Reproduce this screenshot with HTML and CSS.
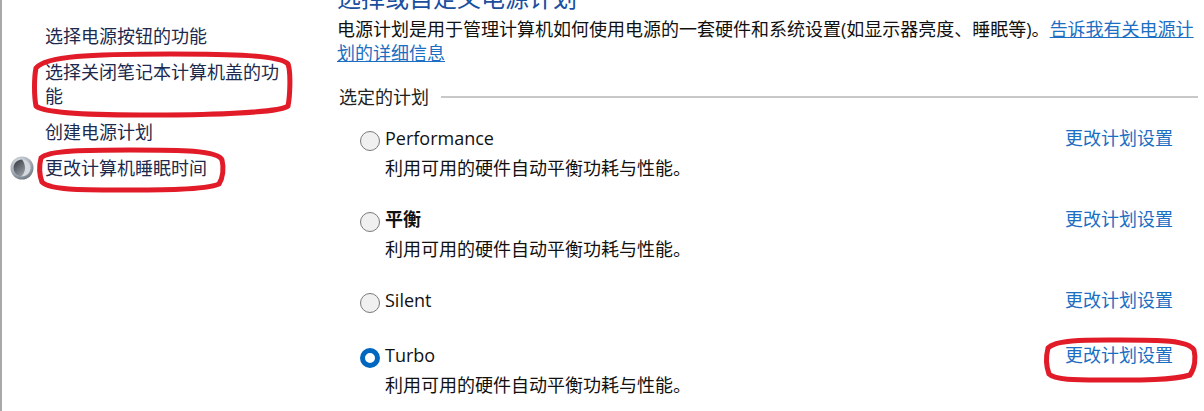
FILE: index.html
```html
<!DOCTYPE html>
<html lang="zh-CN">
<head>
<meta charset="utf-8">
<title>电源选项</title>
<link rel="stylesheet" href="styles.css">
</head>
<body>
<div class="page">
  <aside class="sidebar">
    <a class="side-link">选择电源按钮的功能</a>
    <a class="side-link">选择关闭笔记本计算机盖的功能</a>
    <a class="side-link">创建电源计划</a>
    <a class="side-link">
      <svg class="moon" viewBox="0 0 24 24" aria-hidden="true">
        <defs>
          <radialGradient id="rim" cx="40%" cy="30%" r="80%">
            <stop offset="0" stop-color="#e4e8ec"/>
            <stop offset="0.6" stop-color="#a2abb5"/>
            <stop offset="1" stop-color="#5c6672"/>
          </radialGradient>
          <linearGradient id="dark" x1="0" y1="0" x2="0.6" y2="1">
            <stop offset="0" stop-color="#2f353d"/>
            <stop offset="1" stop-color="#8f969e"/>
          </linearGradient>
        </defs>
        <circle cx="12" cy="12" r="11.5" fill="url(#rim)"/>
        <circle cx="12" cy="12" r="8.5" fill="#d5d9de"/>
        <path d="M12 3.500C7.300 3.500 3.500 7.300 3.500 12c0 4.400 3.300 8 7.600 8.450 2.500-2.100 3.900-5.100 3.900-8.450 0-3.200-1.100-6.200-3-8.500Z" fill="url(#dark)"/>
      </svg>
      更改计算机睡眠时间
    </a>
  </aside>
  <main class="content">
    <h1 class="title">选择或自定义电源计划</h1>
    <p class="intro">电源计划是用于管理计算机如何使用电源的一套硬件和系统设置(如显示器亮度、睡眠等)。<a class="link underlined">告诉我有关电源计划的详细信息</a></p>
    <div class="group-head"><span>选定的计划</span><i class="rule"></i></div>
    <section class="plan">
      <span class="radio"></span>
      <div class="plan-text"><div class="plan-name">Performance</div><div class="plan-desc">利用可用的硬件自动平衡功耗与性能。</div></div>
      <a class="link plan-link">更改计划设置</a>
    </section>
    <section class="plan">
      <span class="radio"></span>
      <div class="plan-text"><div class="plan-name bold">平衡</div><div class="plan-desc">利用可用的硬件自动平衡功耗与性能。</div></div>
      <a class="link plan-link">更改计划设置</a>
    </section>
    <section class="plan plan-short">
      <span class="radio"></span>
      <div class="plan-text"><div class="plan-name">Silent</div></div>
      <a class="link plan-link">更改计划设置</a>
    </section>
    <section class="plan">
      <span class="radio checked"></span>
      <div class="plan-text"><div class="plan-name">Turbo</div><div class="plan-desc">利用可用的硬件自动平衡功耗与性能。</div></div>
      <a class="link plan-link">更改计划设置</a>
    </section>
  </main>
</div>
<svg class="marks" viewBox="0 0 1204 411" aria-hidden="true">
  <path d="M36 68C46 56 90 54 170 54C230 54 280 55 288 64C291 72 290 96 288 106C280 113 200 115 140 115C90 115 44 113 36 106C34 96 34 78 36 68Z"/>
  <path d="M41 158C48 150 90 150 130 150C180 150 218 150 222 160C224 168 223 178 219 184C205 190 160 190 120 190C80 190 50 190 42 182C39 174 39 166 41 158Z"/>
  <path d="M1048 348C1056 339 1090 340 1120 340C1160 340 1188 340 1194 350C1196 358 1195 368 1190 375C1170 381 1130 380 1100 380C1075 380 1055 380 1049 374C1046 366 1046 356 1048 348Z"/>
</svg>
</body>
</html>
```
FILE: styles.css
```css
* { box-sizing: border-box; }
html, body {
  margin: 0;
  height: 100%;
  overflow: hidden;
  background: #fff;
}
body {
  position: relative;
  font: 18px/24px "Open Sans", "Noto Sans CJK SC", sans-serif;
  color: #111;
}
.page {
  display: flex;
  height: 411px;
  overflow: hidden;
}
.sidebar {
  width: 337px;
  flex: none;
  border-left: 2px solid #a9a9a9;
  padding: 24px 42px 0 43px;
  display: flex;
  flex-direction: column;
  gap: 12px;
  color: #1d2a4d;
}
.side-link { display: block; position: relative; }
.moon {
  position: absolute;
  left: -35px;
  top: 0;
  width: 24px;
  height: 24px;
}
.content {
  flex: 1;
  min-width: 0;
  padding-right: 6px;
}
.title {
  margin: -14px 0 7px;
  font-size: 24px;
  line-height: 24px;
  font-weight: 400;
  color: #1a4fa0;
}
.intro { margin: 0 0 20px; }
.link { color: #1b6ec2; }
.underlined { text-decoration: underline; }
.group-head {
  display: flex;
  align-items: center;
  gap: 12px;
  margin: 0 0 14px 2px;
  color: #222;
}
.group-head span { flex: none; }
.rule {
  flex: 1;
  height: 2px;
  background: #c8c8c8;
}
.plan {
  display: flex;
  align-items: flex-start;
  padding-left: 23px;
  margin-bottom: 21px;
}
.plan-short { margin-bottom: 25px; }
.radio {
  flex: none;
  width: 20px;
  height: 20px;
  margin: 8px 5px 0 0;
  border: 1px solid #7a7a7a;
  border-radius: 50%;
  background: #f0f0f0;
}
.radio.checked {
  border: 5px solid #0067c0;
  background: #fff;
}
.plan-text { flex: 1; }
.plan-name { line-height: 30px; }
.plan-desc { line-height: 30px; }
.bold { font-weight: 700; }
.plan-link {
  flex: none;
  line-height: 30px;
  margin-right: 25px;
}
.marks {
  position: absolute;
  inset: 0;
  width: 1204px;
  height: 411px;
  pointer-events: none;
}
.marks path {
  fill: none;
  stroke: #e11b28;
  stroke-width: 5;
}
```
